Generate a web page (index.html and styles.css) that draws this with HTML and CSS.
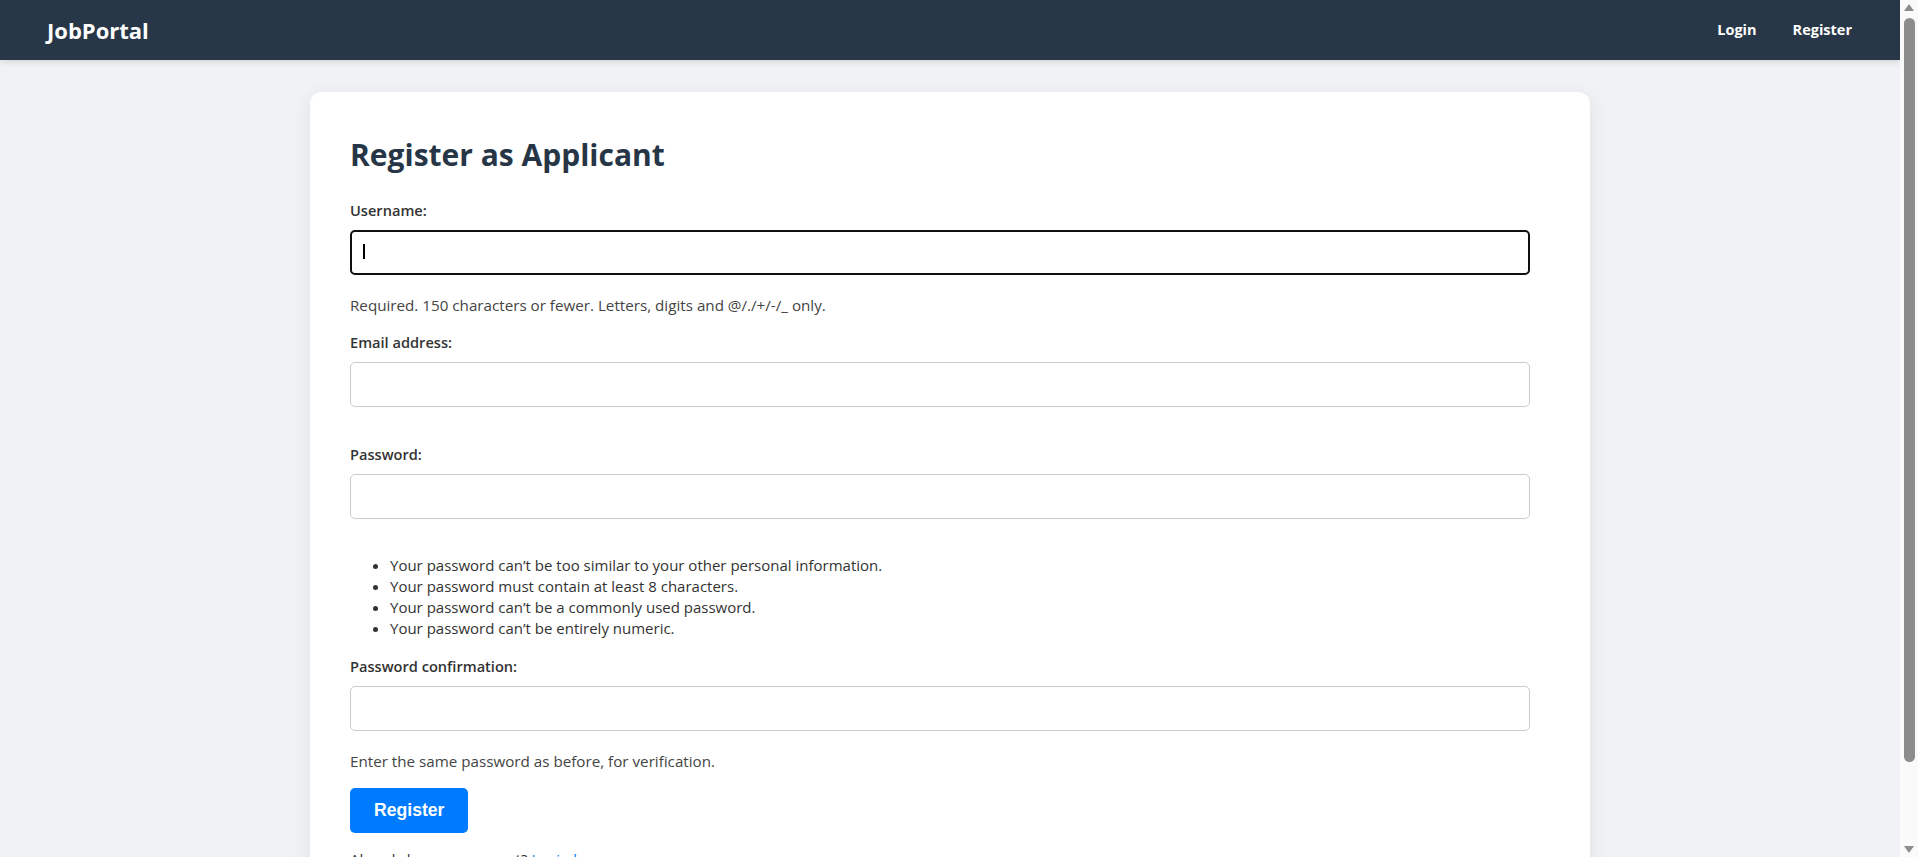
FILE: index.html
```html
<!DOCTYPE html>
<html lang="en">
<head>
<meta charset="utf-8">
<title>Register as Applicant - JobPortal</title>
<link rel="stylesheet" href="styles.css">
</head>
<body>
<header class="navbar">
  <a class="brand" href="#">JobPortal</a>
  <nav class="nav-links">
    <a class="nav-link" href="#">Login</a>
    <a class="nav-link" href="#">Register</a>
  </nav>
</header>
<main class="page">
  <section class="card">
    <h2 class="card-title">Register as Applicant</h2>
    <form class="form">
      <div class="field">
        <label class="field-label" for="id_username">Username:</label>
        <input class="field-input is-focused" type="text" id="id_username">
        <span class="caret"></span>
        <span class="helptext">Required. 150 characters or fewer. Letters, digits and @/./+/-/_ only.</span>
      </div>
      <div class="field">
        <label class="field-label" for="id_email">Email address:</label>
        <input class="field-input" type="email" id="id_email">
      </div>
      <div class="field">
        <label class="field-label" for="id_password1">Password:</label>
        <input class="field-input" type="password" id="id_password1">
        <ul class="help-list">
          <li>Your password can’t be too similar to your other personal information.</li>
          <li>Your password must contain at least 8 characters.</li>
          <li>Your password can’t be a commonly used password.</li>
          <li>Your password can’t be entirely numeric.</li>
        </ul>
      </div>
      <div class="field">
        <label class="field-label" for="id_password2">Password confirmation:</label>
        <input class="field-input" type="password" id="id_password2">
        <span class="helptext">Enter the same password as before, for verification.</span>
      </div>
      <button class="btn-primary" type="submit">Register</button>
    </form>
    <p class="footer-text">Already have an account? <a class="link" href="#">Login here</a></p>
  </section>
</main>
<div class="scrollbar" aria-hidden="true">
  <span class="scroll-arrow scroll-arrow-up"></span>
  <span class="scroll-thumb"></span>
  <span class="scroll-arrow scroll-arrow-down"></span>
</div>
</body>
</html>
```
FILE: styles.css
```css
* { box-sizing: border-box; }

html, body {
  margin: 0;
  padding: 0;
}

body {
  background: #f0f2f5;
  font-family: "Open Sans", "Noto Sans", sans-serif;
  color: #333;
  padding-right: 18px;
}

.navbar {
  height: 60px;
  background: #283747;
  display: flex;
  align-items: center;
  justify-content: space-between;
  padding: 0 48px 0 47px;
  box-shadow: 0 2px 6px rgba(0, 0, 0, 0.12);
  position: relative;
}

.brand {
  color: #fff;
  text-decoration: none;
  font-weight: 700;
  font-size: 22px;
  line-height: 30px;
}

.nav-links {
  display: flex;
  gap: 36px;
}

.nav-link {
  color: #fff;
  text-decoration: none;
  font-weight: 700;
  font-size: 14.5px;
  line-height: 20px;
}

.page {
  padding-top: 32px;
}

.card {
  max-width: 1280px;
  margin: 0 auto;
  background: #fff;
  border-radius: 12px;
  padding: 40px;
  box-shadow: 0 4px 20px rgba(0, 0, 0, 0.08);
}

.card-title {
  margin: 5px 0 27px;
  font-size: 30px;
  line-height: 36px;
  font-weight: 700;
  color: #263646;
}

.form {
  margin: 0;
}

.field {
  position: relative;
  padding-bottom: 17px;
}

.field-label {
  display: block;
  font-weight: 600;
  font-size: 14.6px;
  line-height: 20px;
  margin-bottom: 10px;
  color: #333;
}

.field-input {
  display: block;
  width: calc(100% - 20px);
  height: 45px;
  padding: 0 12px;
  border: 1px solid #ccc;
  border-radius: 5px;
  font-family: "Open Sans", sans-serif;
  font-size: 16px;
  color: #111;
  background: #fff;
  margin: 0 0 20px;
  outline: none;
}

.field-input.is-focused,
.field-input:focus {
  border: 2px solid #101010;
  padding: 0 11px;
}

.caret {
  position: absolute;
  left: 13px;
  top: 44px;
  width: 2px;
  height: 15px;
  background: #000;
}

.helptext {
  display: block;
  font-size: 15.2px;
  line-height: 20px;
  color: #444;
}

.help-list {
  margin: 0;
  padding: 15.5px 0 0 40px;
  font-size: 15px;
  line-height: 21px;
  color: #333;
}

.btn-primary {
  display: block;
  background: #007bff;
  color: #fff;
  border: none;
  border-radius: 5px;
  padding: 12px 24px;
  font-family: "Liberation Sans", Arial, sans-serif;
  font-weight: 700;
  font-size: 17.6px;
  line-height: 21px;
  cursor: pointer;
}

.footer-text {
  margin: 15px 0 0;
  font-size: 15px;
  line-height: 22px;
  color: #333;
}

.link {
  color: #007bff;
  text-decoration: none;
}

/* browser scrollbar as seen in the screenshot */
.scrollbar {
  position: fixed;
  top: 0;
  right: 0;
  width: 18px;
  height: 100vh;
  background: #fafafa;
}

.scroll-thumb {
  position: absolute;
  left: 4px;
  top: 18px;
  width: 11px;
  height: 744px;
  border-radius: 6px;
  background: #8c8c8c;
}

.scroll-arrow {
  position: absolute;
  left: 4px;
  width: 0;
  height: 0;
  border-left: 5.5px solid transparent;
  border-right: 5.5px solid transparent;
}

.scroll-arrow-up {
  top: 4px;
  border-bottom: 7px solid #8c8c8c;
}

.scroll-arrow-down {
  bottom: 4px;
  border-top: 7px solid #8c8c8c;
}
```
